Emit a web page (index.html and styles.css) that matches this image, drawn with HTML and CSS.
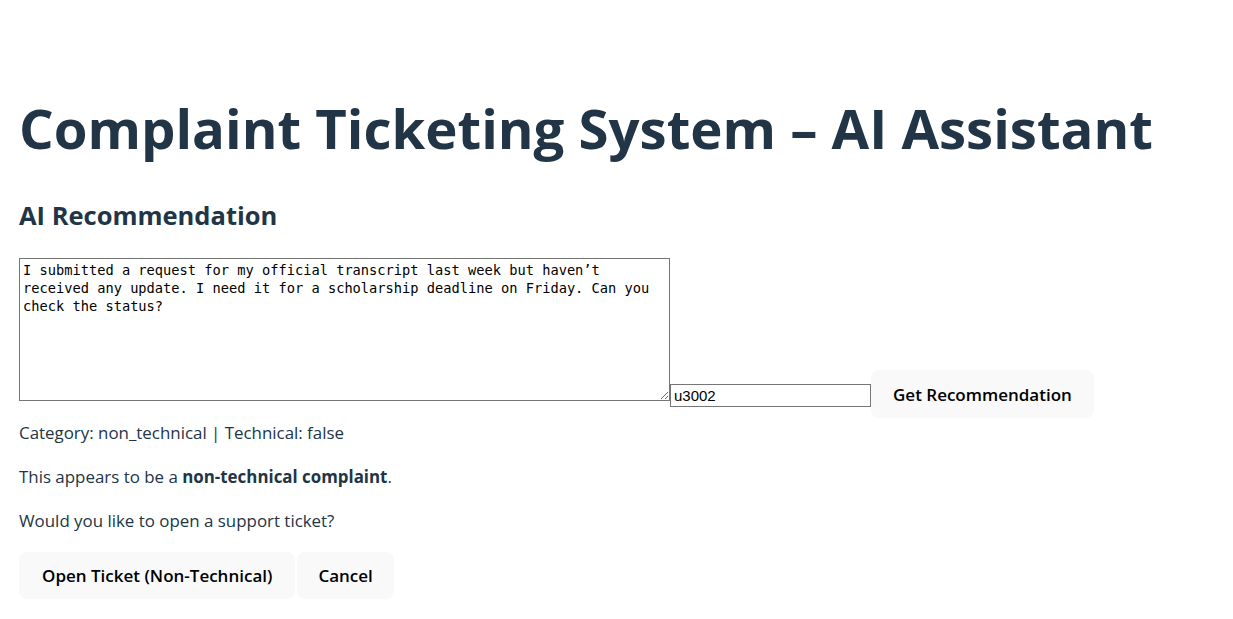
FILE: index.html
```html
<!DOCTYPE html>
<html lang="en">
<head>
<meta charset="utf-8">
<title>Complaint Ticketing System</title>
<link rel="stylesheet" href="styles.css">
</head>
<body>
<main class="page">
  <h1 class="title">Complaint Ticketing System – AI Assistant</h1>
  <h2 class="subtitle">AI Recommendation</h2>
  <div class="form-row">
    <textarea class="complaint" rows="7">I submitted a request for my official transcript last week but haven’t received any update. I need it for a scholarship deadline on Friday. Can you check the status?</textarea>
    <input class="user-id" type="text" value="u3002">
    <button class="btn btn-get" type="button">Get Recommendation</button>
  </div>
  <p class="text">Category: non_technical | Technical: false</p>
  <p class="text">This appears to be a <strong>non-technical complaint</strong>.</p>
  <p class="text">Would you like to open a support ticket?</p>
  <div class="actions">
    <button class="btn btn-open" type="button">Open Ticket (Non-Technical)</button>
    <button class="btn btn-cancel" type="button">Cancel</button>
  </div>
</main>
</body>
</html>
```

FILE: styles.css
```css
html, body {
  margin: 0;
  padding: 0;
  background: #ffffff;
}

body {
  font-family: "Open Sans", "Noto Sans", sans-serif;
  color: #213547;
  font-size: 16px;
}

.page {
  padding: 90px 19px 0 19px;
}

.title {
  margin: 0;
  font-size: 54.5px;
  line-height: 76px;
  font-weight: 700;
  color: #213547;
}

.subtitle {
  margin: 33px 0 0 0;
  font-size: 25.5px;
  line-height: 32px;
  font-weight: 700;
  color: #213547;
}

.form-row {
  margin-top: 27px;
  display: flex;
  align-items: flex-start;
}

.complaint {
  box-sizing: border-box;
  width: 651px;
  height: 143px;
  margin: 0;
  padding: 2px 3px;
  border: 1px solid #767676;
  font-family: "DejaVu Sans Mono", monospace;
  font-size: 13.7px;
  line-height: 18px;
  color: #000;
  resize: both;
}

.user-id {
  box-sizing: border-box;
  width: 201px;
  height: 23px;
  margin: 126px 0 0 0;
  padding: 1px 3px;
  border: 1px solid #767676;
  font-family: "Liberation Sans", Arial, sans-serif;
  font-size: 15px;
  color: #000;
}

.btn {
  box-sizing: border-box;
  margin: 0;
  height: 47px;
  padding: 0 21px;
  border: 1px solid transparent;
  border-radius: 8px;
  background: #f9f9f9;
  font-family: "Open Sans", "Noto Sans", sans-serif;
  font-size: 17px;
  font-weight: 600;
  color: #000;
  cursor: pointer;
}

.btn-get {
  height: 48px;
  margin: 112px 0 0 0;
}

.text {
  margin: 0 0 18px 0;
  font-size: 16.9px;
  line-height: 26px;
}

.form-row + .text {
  margin-top: 2px;
}

.text strong {
  font-weight: 700;
}

.actions {
  display: flex;
  gap: 2px;
  margin-top: 15px;
}

.btn-open {
  padding: 0 22px;
}

.btn-cancel {
  padding: 0 20px;
}
```
